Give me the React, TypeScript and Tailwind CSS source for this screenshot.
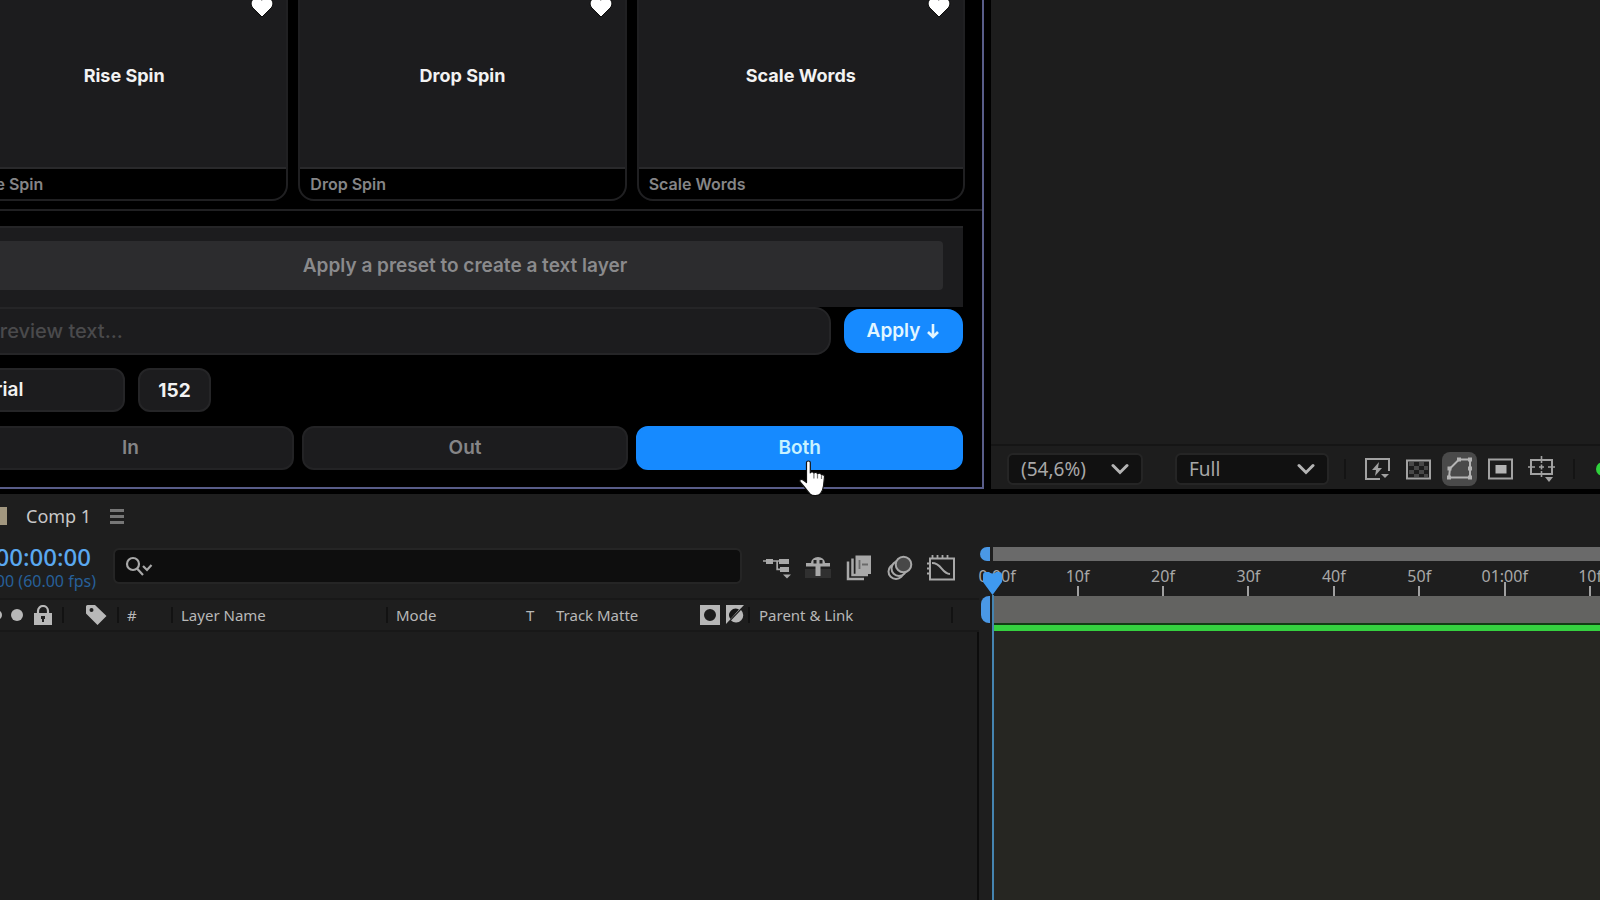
import type { ReactNode } from "react";

const presets = ["Rise Spin", "Drop Spin", "Scale Words"];

const ticks = ["0:00f", "10f", "20f", "30f", "40f", "50f", "01:00f", "10f"];

function Heart() {
  return (
    <svg viewBox="0 0 24 24" className="h-6 w-6" fill="#fff" stroke="#0a0a0a" strokeWidth="1">
      <path d="M12 22 2.9 13C.6 10.600 .6 6.800 2.900 4.500 5.300 2.200 9 2.200 11.300 4.500L12 5.200l.7-.7c2.300-2.300 6-2.300 8.400 0 2.300 2.300 2.300 6.100 0 8.500z" />
    </svg>
  );
}

function Chevron() {
  return (
    <svg
      viewBox="0 0 18 12"
      className="pointer-events-none absolute top-1/2 right-3 h-3 w-[18px] -translate-y-1/2"
      fill="none"
      stroke="#b4b4b4"
      strokeWidth="3"
      strokeLinecap="round"
    >
      <path d="M2 2.500l7 7 7-7" />
    </svg>
  );
}

function HandCursor() {
  return (
    <svg viewBox="0 0 28 38" className="pointer-events-none absolute top-8 left-1/2 z-20 -ml-0.5 h-[38px] w-7" fill="#fff" stroke="#111" strokeWidth="1.200" strokeLinejoin="round">
      <path d="M8.500 2.500c0-2 3.800-2 3.800 0V13c.3-1.500 3.400-1.300 3.600.3.500-1.300 3.400-1 3.600.6.600-1.100 3.800-1 4 1.100 1.300-.9 3 0 3 1.500L25.500 26c-.4 3-1 5-3 7.500-1.500 2.600-8 3-10.500.5-2.500-3-5-6.500-9.500-11.500-2-2.600.6-4 2.700-2.500l3.300 2.600z" />
      <path d="M15.900 13.500v5M19.500 14v4.500M23.500 15.500v3.500" fill="none" stroke="#777" />
    </svg>
  );
}

function PresetCard({ name }: { name: string }) {
  return (
    <article className="relative flex-1 overflow-hidden rounded-2xl border-2 border-[#202022] bg-black">
      <button aria-label={`Favorite ${name}`} className="absolute top-[11px] right-3">
        <Heart />
      </button>
      <div className="flex h-[185px] items-center justify-center border-b-2 border-[#29292b] bg-[#1c1c1e] text-lg font-bold text-[#f2f2f2]">
        {name}
      </div>
      <p className="px-[10px] text-base leading-[30px] font-semibold text-[#858587]">{name}</p>
    </article>
  );
}

function PresetPanel() {
  return (
    <section className="w-[984px] shrink-0 border-r-2 border-b-2 border-[#585c88] bg-black pb-[17px] font-[Inter,sans-serif]">
      <div className="-mt-[18px] mr-[17px] -ml-10 flex gap-[10px]">
        {presets.map((p) => (
          <PresetCard key={p} name={p} />
        ))}
      </div>
      <div className="mt-2 border-t-2 border-[#202022]" />
      <div className="mt-[15px] mr-[19px] -ml-[33px]">
        <div className="border-t-2 border-[#252527] bg-[#1c1c1e] pt-[13px] pr-5 pb-[17px]">
          <p className="rounded bg-[#2c2c2e] pl-5 text-center text-[19px] leading-[49px] font-semibold text-[#8a8a8c]">
            Apply a preset to create a text layer
          </p>
        </div>
        <div className="flex items-start gap-[13px]">
          <input
            aria-label="Preview text"
            placeholder="Preview text..."
            className="h-12 min-w-0 flex-1 rounded-r-2xl border-2 border-[#252527] bg-[#1c1c1e] px-[18px] text-xl font-medium text-white placeholder:text-[#4a4a4c]"
          />
          <button className="mt-0.5 flex h-11 w-[119px] items-center justify-center gap-1.5 rounded-2xl bg-[#168aff] text-[19px] font-semibold text-[#e2f6ff]">
            Apply
            <svg viewBox="0 0 14 16" className="h-4 w-3.5" fill="none" stroke="currentColor" strokeWidth="2.600">
              <path d="M7 1v13M2 9l5 5 5-5" />
            </svg>
          </button>
        </div>
        <div className="mt-[13px] flex gap-[13px]">
          <select aria-label="Font" className="h-11 w-[158px] appearance-none rounded-xl border-2 border-[#252527] bg-[#1c1c1e] px-3 text-[19px] font-semibold text-[#f2f2f2]">
            <option>Arial</option>
          </select>
          <input
            aria-label="Font size"
            defaultValue="152"
            className="h-11 w-[73px] rounded-xl border-2 border-[#252527] bg-[#1c1c1e] text-center text-[19px] font-bold text-[#f2f2f2]"
          />
        </div>
        <div className="mt-[14px] flex gap-2 text-[19px] font-semibold text-[#858587]">
          <button className="h-11 flex-1 rounded-xl border-2 border-[#232325] bg-[#1c1c1e]">In</button>
          <button className="h-11 flex-1 rounded-xl border-2 border-[#232325] bg-[#1c1c1e]">Out</button>
          <button className="relative h-11 flex-1 rounded-xl border-2 border-[#168aff] bg-[#168aff] text-[#c8f2ff]">
            Both
            <HandCursor />
          </button>
        </div>
      </div>
    </section>
  );
}

function ViewIcon({ label, active, children }: { label: string; active?: boolean; children: ReactNode }) {
  return (
    <button
      aria-label={label}
      className={active ? "rounded-lg bg-[#4a4a4a] p-1" : "p-1"}
    >
      <svg viewBox="0 0 27 26" className="h-[26px] w-[27px]" fill="none" stroke="#a2a2a2" strokeWidth="2">
        {children}
      </svg>
    </button>
  );
}

function Viewer() {
  return (
    <section className="flex min-w-0 flex-1 flex-col bg-[#1d1d1d]">
      <div className="flex-1" />
      <div className="flex h-[45px] items-center overflow-hidden border-t-2 border-[#151515] pt-0.5 pl-[18px]">
        <div className="relative">
          <select aria-label="Magnification" className="h-7 w-[132px] appearance-none rounded bg-[#111] pl-3 text-[19px] leading-7 text-[#a8a8a8] outline-2 outline-[#252525]">
            <option>(54,6%)</option>
          </select>
          <Chevron />
        </div>
        <i className="mx-[18px] h-5 w-0.5 bg-[#141414]" />
        <div className="relative">
          <select aria-label="Resolution" className="h-7 w-[150px] appearance-none rounded bg-[#111] pl-3 text-[19px] leading-7 text-[#a8a8a8] outline-2 outline-[#252525]">
            <option>Full</option>
          </select>
          <Chevron />
        </div>
        <i className="ml-[17px] h-5 w-0.5 shrink-0 bg-[#141414]" />
        <div className="ml-[14px] flex gap-1.5">
          <ViewIcon label="Fast previews">
            <path d="M16 23H2V3h23v12" />
            <path d="M15 6l-7 8h4l-1 6 7-8h-4z" fill="#a2a2a2" stroke="none" />
            <path d="M17 18h8l-4 4z" fill="#a2a2a2" stroke="none" />
          </ViewIcon>
          <ViewIcon label="Transparency grid">
            <path d="M2 4.500h23v18H2z" />
            <path d="M4 6h5v4H4zM14 6h5v4h-5zM9 10h5v4H9zM19 10h4v4h-4zM4 14h5v4H4zM14 14h5v4h-5zM9 18h5v3H9zM19 18h4v3h-4z" fill="#484848" stroke="none" />
          </ViewIcon>
          <ViewIcon label="Mask visibility" active>
            <path d="M3 21.500h21v-18H13l-9 9z" stroke="#b4b4b4" />
            <path d="M1 19.500h4v4H1zM22 19.500h4v4h-4zM22 1.500h4v4h-4zM11 1.500h4v4h-4zM1.500 10.500h4v4h-4zM22 10.500h4v4h-4z" fill="#b4b4b4" stroke="none" />
          </ViewIcon>
          <ViewIcon label="Region of interest">
            <path d="M2 3.500h23v19H2z" />
            <path d="M8.500 9h11v8.500h-11z" fill="#b4b4b4" stroke="none" />
          </ViewIcon>
          <ViewIcon label="Guides">
            <path d="M3 4h21v14H3z" />
            <path d="M13.500 0v7M13.500 15v6M0 11h7M20 11h7M11 11h5M13.500 8.500v5" strokeWidth="1.600" />
            <path d="M17 21h8l-4 5z" fill="#a2a2a2" stroke="none" />
          </ViewIcon>
        </div>
        <i className="ml-[14px] h-5 w-0.5 shrink-0 bg-[#141414]" />
        <span className="ml-[21px] h-3.5 w-3.5 shrink-0 rounded-full bg-[#2fd13c]" />
      </div>
    </section>
  );
}

function TimelineIcons() {
  return (
    <div className="ml-[23px] flex gap-[13px] text-[#a8a8a8]">
      <button aria-label="Composition flowchart">
        <svg viewBox="0 0 28 28" className="h-7 w-7" fill="currentColor">
          <path d="M0 6.200h3V5h7v1.200h6V5h10v5H16V7.800h-1v6.700h2V13h9v5h-9v-1.800h-3.700V7.800H10V10H3V7.800H0z" />
          <path d="M20 20.500h8l-4 4z" />
        </svg>
      </button>
      <button aria-label="Hide shy layers">
        <svg viewBox="0 0 28 28" className="h-7 w-7" fill="currentColor">
          <path d="M1 15h26v9H1z" fill="#303030" />
          <path d="M2 9h5a7 6 0 0 1 14 0h5v3.500h-9.500V22h-5v-9.500H2z" />
          <path d="M9.500 6h3v3.500h-3zM15.500 6h3v3.500h-3z" fill="#222" />
        </svg>
      </button>
      <button aria-label="Frame blending">
        <svg viewBox="0 0 28 28" className="h-7 w-7" fill="none" stroke="currentColor" strokeWidth="2.500">
          <path d="M3 7.500V25h16" />
          <path d="M7.500 4.500v16.500H23" />
          <path d="M10.500 1.500H26V20H10.500z" fill="currentColor" stroke="none" />
          <path d="M14.500 6v9M17 10.500h6" stroke="#6a6a6a" strokeWidth="1.800" />
        </svg>
      </button>
      <button aria-label="Motion blur">
        <svg viewBox="0 0 28 28" className="h-7 w-7" fill="#1e1e1e" stroke="currentColor" strokeWidth="2">
          <circle cx="10" cy="17.500" r="7.500" />
          <circle cx="13" cy="14.500" r="7.500" />
          <circle cx="17.500" cy="10.500" r="7.800" fill="#484848" />
        </svg>
      </button>
      <button aria-label="Graph editor">
        <svg viewBox="0 0 28 28" className="h-7 w-7" fill="none" stroke="currentColor" strokeWidth="2">
          <path d="M3 4.500h24v21H3z" />
          <path d="M5.500 1v3M10.500 1v3M15.500 1v3M20.500 1v3M0 9.500h3M0 14.500h3M0 19.500h3" strokeWidth="1.800" />
          <path d="M5 9c10 0 9 10 18 11" />
        </svg>
      </button>
    </div>
  );
}

function Divider() {
  return <i className="h-4 w-0.5 shrink-0 bg-[#121212]" />;
}

function Columns() {
  return (
    <div className="flex h-[34px] items-center border-y-2 border-[#181818] text-[15px] text-[#b8b8b8]">
      <div className="flex w-[62px] items-center">
        <span className="-ml-2 h-2.5 w-2.5 rounded-full bg-current" />
        <span className="ml-[9px] h-3 w-3 rounded-full bg-current" />
        <svg viewBox="0 0 18 20" className="ml-[11px] h-5 w-[18px]" fill="currentColor">
          <path d="M0 8h18v12H0z" />
          <path d="M4 8V6a5 5 0 0 1 10 0v2" fill="none" stroke="currentColor" strokeWidth="2.200" />
          <path d="M7 11h4v3h-1v3H8v-3H7z" fill="#222" />
        </svg>
      </div>
      <Divider />
      <svg viewBox="0 0 22 22" className="mr-[10px] ml-[21px] h-[22px] w-[22px]" fill="currentColor">
        <path fillRule="evenodd" d="M1 2.500Q1 1 2.500 1H10l11.500 11-9 9L1 9.500zM6.500 4a2 2 0 1 0 0 4 2 2 0 0 0 0-4z" />
      </svg>
      <Divider />
      <span className="w-[52px] pl-2">#</span>
      <Divider />
      <span className="w-[213px] pl-2">Layer Name</span>
      <Divider />
      <span className="w-[138px] pl-2">Mode</span>
      <span className="w-[30px]">T</span>
      <span className="w-[144px]">Track Matte</span>
      <svg viewBox="0 0 44 20" className="h-5 w-11" fill="currentColor">
        <path fillRule="evenodd" d="M0 0h20v20H0zM10 4a6 6 0 1 0 0 12 6 6 0 0 0 0-12z" />
        <path d="M26 0h18L26 19z" />
        <path d="M30.500 14a6.500 6.500 0 0 1 8.500-9.500z" fill="#161616" />
        <path d="M41 5a6.500 6.500 0 0 1-10 10.500z" />
      </svg>
      <i className="ml-1 h-4 w-0.5 bg-[#121212]" />
      <span className="w-[201px] pl-[9px]">Parent &amp; Link</span>
      <Divider />
    </div>
  );
}

function Ruler() {
  return (
    <div className="relative flex min-w-0 flex-1 flex-col pt-[53px]">
      <div className="flex h-[14px] gap-[3px]">
        <span className="ml-px w-[10px] rounded-l-full bg-[#4a98e6]" />
        <span className="flex-1 bg-[#6a6a6a]" />
      </div>
      <div className="ml-[13px] flex h-[35px]">
        {ticks.map((t, i) => (
          <div
            key={i}
            className="flex w-[14.05%] shrink-0 flex-col items-center justify-end text-base leading-5 text-[#a8a8a8] first:-ml-[7%] first:pl-[10px]"
          >
            <span>{t}</span>
            {i > 0 && (
              <i className={t === "01:00f" ? "-mt-1 h-3.5 w-0.5 bg-[#a0a0a0]" : "h-2.5 w-0.5 bg-[#a0a0a0]"} />
            )}
            {i === 0 && <i className="h-2.5" />}
          </div>
        ))}
      </div>
      <div className="flex h-[27px] gap-[3px]">
        <span className="ml-[2px] w-[9px] rounded-l-lg bg-[#4a98e6]" />
        <span className="flex-1 bg-[#636361]" />
      </div>
      <div className="ml-[13px] h-2 border-t-2 border-[#123c14] bg-[#35d140]" />
      <div className="ml-[13px] flex-1 bg-[#262622]" />
      <div className="absolute top-[77px] bottom-0 left-[3px] flex w-[21px] flex-col items-center">
        <svg viewBox="0 0 21 24" className="h-6 w-[21px] shrink-0" fill="#3f9af0">
          <path d="M1 4Q1 1 4 1h3q3.500 3 7 0h3q3 0 3 3v7L10.500 24 1 11z" />
        </svg>
        <i className="w-0.5 flex-1 bg-[#4584b0]" />
      </div>
    </div>
  );
}

function Timeline() {
  return (
    <section className="flex flex-1 bg-[#1e1e1e]">
      <div className="flex w-[979px] flex-col">
        <div className="flex h-11 items-center text-[#c8c8c8]">
          <span className="h-[18px] w-[7px] bg-[#a2977f]" />
          <h2 className="ml-[19px] text-lg">Comp 1</h2>
          <button aria-label="Panel menu" className="ml-[19px] flex flex-col gap-[3px]">
            <i className="h-[3px] w-3.5 bg-[#777]" />
            <i className="h-[3px] w-3.5 bg-[#777]" />
            <i className="h-[3px] w-3.5 bg-[#777]" />
          </button>
        </div>
        <div className="flex h-[60px] items-center">
          <div className="flex w-24 flex-col items-end pt-0.5">
            <p className="mr-[5px] text-2xl leading-6 font-medium whitespace-nowrap text-[#5aa8f0]">0:00:00:00</p>
            <p className="text-base leading-6 whitespace-nowrap text-[#27609a]">00000 (60.00 fps)</p>
          </div>
          <label className="-mt-1 ml-[19px] flex h-8 w-[625px] items-center rounded bg-[#0e0e0e] pl-[10px] outline-2 outline-[#252525]">
            <svg viewBox="0 0 28 20" className="h-5 w-7" fill="none" stroke="#a8a8a8" strokeWidth="2.200">
              <circle cx="8" cy="8" r="6" />
              <path d="M12 12.500l6 6.500M18 10l4 4 4.500-5" />
            </svg>
            <input aria-label="Search layers" className="min-w-0 flex-1 bg-transparent text-base text-[#c8c8c8] outline-none" />
          </label>
          <TimelineIcons />
        </div>
        <Columns />
        <div className="flex-1 border-r-2 border-[#0c0c0c] bg-[#1d1d1d]" />
      </div>
      <Ruler />
    </section>
  );
}

export default function App() {
  return (
    <div className="flex min-h-screen flex-col overflow-hidden bg-black font-['Noto_Sans',sans-serif]">
      <div className="flex gap-[7px]">
        <PresetPanel />
        <Viewer />
      </div>
      <div className="h-[5px]" />
      <Timeline />
    </div>
  );
}
